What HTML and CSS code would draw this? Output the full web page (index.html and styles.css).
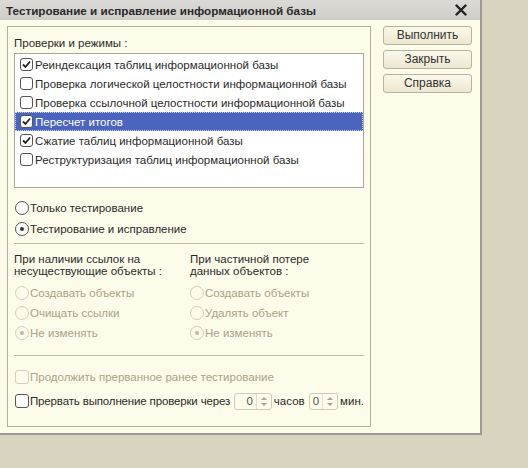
FILE: index.html
```html
<!DOCTYPE html>
<html lang="ru">
<head>
<meta charset="utf-8">
<link rel="stylesheet" href="styles.css">
</head>
<body>
<div class="dialog">
  <div class="titlebar">
    <span class="title">Тестирование и исправление информационной базы</span>
    <svg class="close" width="12" height="12" viewBox="0 0 12 12"><path d="M1.5 1.5L10.5 10.5M10.5 1.5L1.5 10.5" stroke="#222" stroke-width="2.4" stroke-linecap="round"/></svg>
  </div>
  <div class="content">
    <div class="group">
      <div class="label">Проверки и режимы :</div>
      <div class="list">
        <div class="row"><span class="cb checked"><svg width="11" height="11" viewBox="0 0 11 11"><path d="M2 5.5L4.5 8L9 2.5" fill="none" stroke="#222" stroke-width="1.8"/></svg></span>Реиндексация таблиц информационной базы</div>
        <div class="row"><span class="cb"></span>Проверка логической целостности информационной базы</div>
        <div class="row"><span class="cb"></span>Проверка ссылочной целостности информационной базы</div>
        <div class="row selected"><span class="cb checked"><svg width="11" height="11" viewBox="0 0 11 11"><path d="M2 5.5L4.5 8L9 2.5" fill="none" stroke="#222" stroke-width="1.8"/></svg></span>Пересчет итогов</div>
        <div class="row"><span class="cb checked"><svg width="11" height="11" viewBox="0 0 11 11"><path d="M2 5.5L4.5 8L9 2.5" fill="none" stroke="#222" stroke-width="1.8"/></svg></span>Сжатие таблиц информационной базы</div>
        <div class="row"><span class="cb"></span>Реструктуризация таблиц информационной базы</div>
      </div>
      <div class="modes">
        <div class="opt"><span class="rb"></span>Только тестирование</div>
        <div class="opt"><span class="rb on"></span>Тестирование и исправление</div>
      </div>
      <div class="sep"></div>
      <div class="cols">
        <div class="col">
          <div class="caption">При наличии ссылок на<br>несуществующие объекты :</div>
          <div class="opt dis"><span class="rb"></span>Создавать объекты</div>
          <div class="opt dis"><span class="rb"></span>Очищать ссылки</div>
          <div class="opt dis"><span class="rb on"></span>Не изменять</div>
        </div>
        <div class="col">
          <div class="caption">При частичной потере<br>данных объектов :</div>
          <div class="opt dis"><span class="rb"></span>Создавать объекты</div>
          <div class="opt dis"><span class="rb"></span>Удалять объект</div>
          <div class="opt dis"><span class="rb on"></span>Не изменять</div>
        </div>
      </div>
      <div class="sep sep2"></div>
      <div class="opt dis cont"><span class="cb2"></span>Продолжить прерванное ранее тестирование</div>
      <div class="opt stop"><span class="cb2 en"></span><span class="stoptext">Прервать выполнение проверки через</span>
        <span class="spin s1"><span class="val">0</span><span class="arrows"><span class="up"></span><span class="dn"></span></span></span>часов
        <span class="spin s2"><span class="val">0</span><span class="arrows"><span class="up"></span><span class="dn"></span></span></span>мин.</div>
    </div>
    <div class="buttons">
      <div class="btn">Выполнить</div>
      <div class="btn">Закрыть</div>
      <div class="btn">Справка</div>
    </div>
  </div>
</div>
</body>
</html>
```
FILE: styles.css
```css
html, body {
  margin: 0;
  padding: 0;
}
body {
  background: #d8d4c0;
  width: 528px;
  height: 468px;
  font-family: "Liberation Sans", Arial, sans-serif;
  font-size: 11.5px;
  color: #2b2b2b;
  overflow: hidden;
}
.dialog {
  width: 480px;
  height: 433px;
  background: #fdfbea;
  border-right: 2px solid #9c9a92;
  border-bottom: 2px solid #9c9a92;
  display: flex;
  flex-direction: column;
}
.titlebar {
  height: 20px;
  background: linear-gradient(#dcdad6, #cfcdc8);
  display: flex;
  align-items: center;
  justify-content: space-between;
  padding: 0 13px 0 6px;
}
.title {
  font-weight: bold;
  font-size: 11.7px;
  color: #2a2a2a;
}
.close {
  display: block;
}
.content {
  display: flex;
  align-items: flex-start;
  padding: 6px 0 0 7px;
}
.group {
  width: 350px;
  height: 384px;
  border: 1px solid #b4b1a2;
  padding: 9px 6px 6px 6px;
}
.label {
  line-height: 14px;
}
.list {
  margin-top: 3px;
  width: 348px;
  height: 132px;
  border: 1px solid #a9a697;
  background: #ffffff;
  padding-top: 1px;
}
.row {
  height: 19px;
  display: flex;
  align-items: center;
  padding-left: 5px;
  white-space: nowrap;
}
.row.selected {
  background: #4b64bd;
  color: #ffffff;
  outline: 1px dotted #c8d0ee;
  outline-offset: -1px;
}
.cb {
  width: 11px;
  height: 11px;
  border: 1px solid #555;
  border-radius: 3px;
  background: #fff;
  margin-right: 2px;
  display: flex;
  align-items: center;
  justify-content: center;
}
.cb svg { display: block; }
.modes {
  margin-top: 10px;
  display: flex;
  flex-direction: column;
  gap: 1px;
}
.opt {
  height: 20px;
  display: flex;
  align-items: center;
  white-space: nowrap;
}
.rb {
  width: 12px;
  height: 12px;
  border: 1px solid #555;
  border-radius: 50%;
  background: #fff;
  margin-left: 1px;
  margin-right: 1px;
  position: relative;
  flex: none;
}
.rb.on::after {
  content: "";
  position: absolute;
  left: 4px;
  top: 4px;
  width: 4px;
  height: 4px;
  border-radius: 50%;
  background: #333;
}
.dis {
  color: #aaa386;
}
.dis .rb {
  border-color: #d3cfbd;
  background: transparent;
}
.dis .rb.on::after {
  background: #bdb9a8;
}
.sep {
  margin-top: 4px;
  height: 1px;
  background: #bdb9a6;
}
.cols {
  display: flex;
  margin-top: 9px;
}
.col {
  width: 177px;
}
.col + .col .caption {
  padding-left: 1px;
}
.caption {
  line-height: 12px;
  margin-bottom: 6px;
}
.sep2 {
  margin-top: 12px;
}
.cont {
  margin-top: 11px;
}
.stop {
  margin-top: 4px;
}
.stoptext {
  letter-spacing: -0.15px;
}
.cb2 {
  width: 12px;
  height: 12px;
  border: 1px solid #d3cfbd;
  border-radius: 3px;
  margin-left: 1px;
  margin-right: 1px;
  flex: none;
}
.cb2.en {
  border-color: #555;
  background: #fff;
}
.spin {
  display: inline-flex;
  height: 15px;
  border: 1px solid #d0ccb9;
  border-radius: 3px;
  background: #fdfbea;
  margin: 0 2px 0 4px;
}
.s1 { width: 39px; }
.s2 { width: 30px; }
.val {
  flex: 1;
  text-align: right;
  padding-right: 3px;
  line-height: 15px;
  color: #555;
}
.arrows {
  width: 14px;
  border-left: 1px solid #e2dfcf;
  display: flex;
  flex-direction: column;
  align-items: center;
  justify-content: center;
  gap: 3px;
}
.up, .dn {
  width: 0;
  height: 0;
  border-left: 3px solid transparent;
  border-right: 3px solid transparent;
}
.up { border-bottom: 3px solid #a9a594; }
.dn { border-top: 3px solid #a9a594; }
.buttons {
  margin-left: 12px;
  display: flex;
  flex-direction: column;
  gap: 5px;
}
.btn {
  width: 87px;
  height: 17px;
  border: 1px solid #b9b49c;
  border-radius: 3px;
  background: linear-gradient(#fbf9ec, #ece7cf);
  text-align: center;
  line-height: 17px;
  font-size: 12px;
  color: #333;
}
```
